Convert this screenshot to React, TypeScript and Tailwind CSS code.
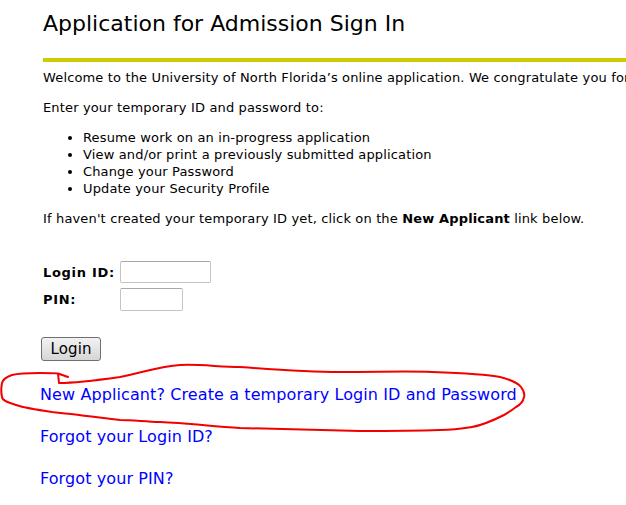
import React from "react";

const bullets = [
  "Resume work on an in-progress application",
  "View and/or print a previously submitted application",
  "Change your Password",
  "Update your Security Profile",
];

function Scribble() {
  return (
    <svg
      className="pointer-events-none absolute left-0 top-0"
      width="626"
      height="505"
      viewBox="0 0 626 505"
      fill="none"
    >
      <path
        d="M68 377 L58 373.5 L59 383 C 70 383 85 382 120 377 C 145 372 160 366 180 365 C 200 364 220 367 240 367 C 280 370 310 372 340 372 C 380 372 410 371 432 372 C 460 373 485 374 500 377 C 512 380 518 383 521 387 C 524 391 525 394 524 397 C 523 402 520 405 516 407 C 512 410 508 413 504 415 C 494 420 484 425 472 427 C 460 429 450 430 440 430 C 410 431 390 431 360 431 C 320 430 280 429 240 428 C 210 426 185 423 160 422 C 140 421 130 420 120 420 C 95 417 72 414 52 412 C 38 410 25 408 16 405 C 6 402 2 400 2 397 C 1 392 1 388 2 383 C 3 379 6 377 12 375 C 20 373 30 373 40 373 C 48 373 54 373 58 373.5"
        stroke="#f20000"
        strokeWidth="2"
        strokeLinecap="round"
        strokeLinejoin="round"
      />
    </svg>
  );
}

export default function App() {
  return (
    <div className="relative h-[505px] w-[626px] overflow-hidden bg-white font-['DejaVu_Sans',sans-serif] text-black">
      <div className="pl-[43px] pt-[11px]">
        <h1 className="text-[22px] leading-[26px]">Application for Admission Sign In</h1>
        <div className="mt-[21px] h-[4px] bg-[#cccc00]" />

        <div className="text-[13px] leading-[17px] tracking-[0.15px]">
          <p className="mt-[7px] whitespace-nowrap">
            Welcome to the University of North Florida’s online application. We congratulate you for
          </p>
          <p className="mt-[13px]">Enter your temporary ID and password to:</p>
          <ul className="mt-[13px] list-disc pl-[40px]">
            {bullets.map((b) => (
              <li key={b}>{b}</li>
            ))}
          </ul>
          <p className="mt-[13px] whitespace-nowrap">
            If haven't created your temporary ID yet, click on the <b>New Applicant</b> link below.
          </p>

          <div className="mt-[34px] flex flex-col gap-[5px]">
            <div className="flex items-center">
              <label className="w-[77px] font-bold tracking-[0.7px]">Login ID:</label>
              <input
                type="text"
                className="h-[22px] w-[91px] rounded-[2px] border border-[#c4c4c4] border-t-[#a8a8a8] bg-white"
              />
            </div>
            <div className="flex items-center">
              <label className="w-[77px] font-bold tracking-[0.7px]">PIN:</label>
              <input
                type="password"
                className="h-[23px] w-[63px] rounded-[2px] border border-[#c4c4c4] border-t-[#a8a8a8] bg-white"
              />
            </div>
          </div>

          <button
            type="button"
            className="-ml-[2px] mt-[26px] h-[24px] w-[60px] rounded-[3px] border border-[#707070] bg-gradient-to-b from-[#f2f2f2] to-[#d6d6d6] text-[15px] leading-[20px]"
          >
            Login
          </button>
        </div>

        <div className="-ml-[3px] flex flex-col items-start text-[16px] leading-[20px] tracking-[0.1px] text-[#0000ff]">
          <a href="#" className="mt-[24px]">
            New Applicant? Create a temporary Login ID and Password
          </a>
          <a href="#" className="mt-[22px]">
            Forgot your Login ID?
          </a>
          <a href="#" className="mt-[22px]">
            Forgot your PIN?
          </a>
        </div>
      </div>
      <Scribble />
    </div>
  );
}
